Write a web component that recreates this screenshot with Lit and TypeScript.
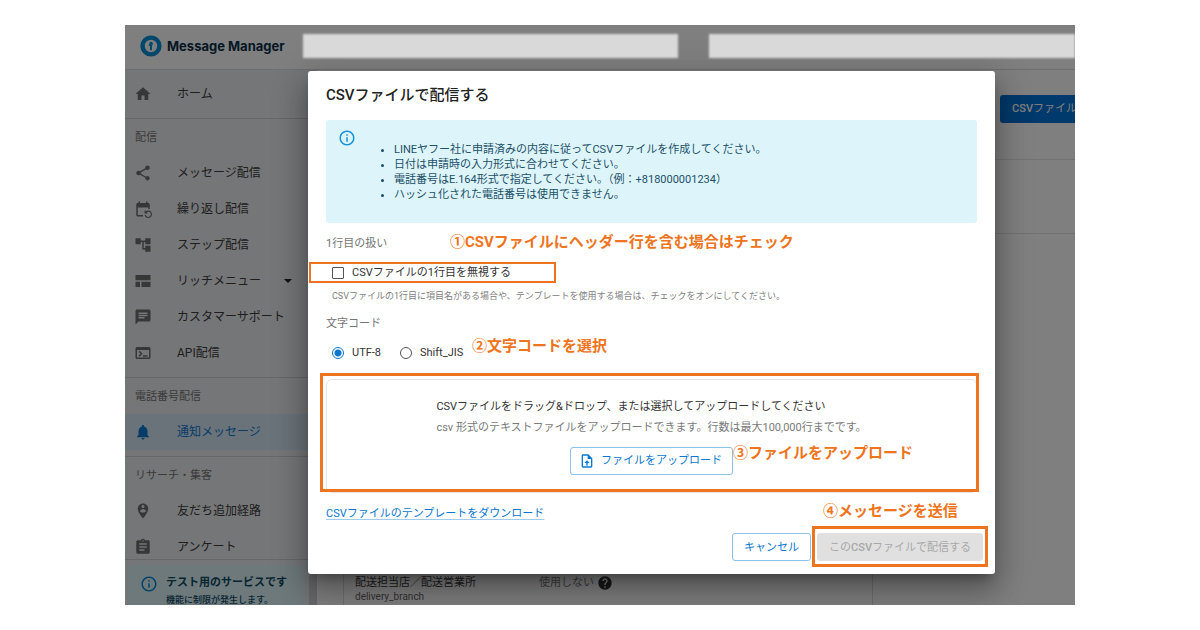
import { LitElement, html, css, svg } from "lit";
import { customElement, property } from "lit/decorators.js";
import { classMap } from "lit/directives/class-map.js";

const ICONS: Record<string, string> = {
  home: "M10 20v-6h4v6h5v-8h3L12 3 2 12h3v8z",
  share:
    "M18 16.08c-.76 0-1.44.3-1.96.77L8.91 12.7c.05-.23.09-.46.09-.7s-.04-.47-.09-.7l7.05-4.11c.54.5 1.25.81 2.04.81 1.66 0 3-1.34 3-3s-1.34-3-3-3-3 1.34-3 3c0 .24.04.47.09.7L8.04 9.81C7.5 9.31 6.79 9 6 9c-1.66 0-3 1.34-3 3s1.34 3 3 3c.79 0 1.5-.31 2.04-.81l7.12 4.16c-.05.21-.08.43-.08.65 0 1.61 1.31 2.92 2.92 2.92s2.92-1.31 2.92-2.92-1.31-2.92-2.92-2.92z",
  repeat:
    "M21 12V6c0-1.1-.9-2-2-2h-1V2h-2v2H8V2H6v2H5c-1.1 0-2 .9-2 2v14c0 1.1.9 2 2 2h7v-2H5V10h14v2h2zm-5.36 8c.43 1.45 1.77 2.5 3.36 2.5 1.93 0 3.5-1.57 3.5-3.5s-1.57-3.5-3.5-3.5c-.95 0-1.82.38-2.45 1H18V18h-4v-4h1.5v1.43c.9-.88 2.14-1.43 3.5-1.43 2.76 0 5 2.24 5 5s-2.24 5-5 5c-2.42 0-4.44-1.72-4.9-4h1.54z",
  tree: "M22 11V3h-7v3H9V3H2v8h7V8h2v10h4v3h7v-8h-7v3h-2V8h2v3z",
  layout: "M2 4h20v7H2zM2 13h6v7H2zM10 13h12v7H10z",
  chat: "M20 2H4c-1.1 0-1.99.9-1.99 2L2 22l4-4h14c1.1 0 2-.9 2-2V4c0-1.1-.9-2-2-2zM6 9h12v2H6V9zm8 5H6v-2h8v2zm4-6H6V6h12v2z",
  terminal:
    "M20 4H4c-1.11 0-2 .9-2 2v12c0 1.1.89 2 2 2h16c1.1 0 2-.9 2-2V6c0-1.1-.89-2-2-2zm0 14H4V8h16v10zm-2-1h-6v-2h6v2zM7.5 17l-1.41-1.41L8.67 13l-2.59-2.59L7.5 9l4 4-4 4z",
  bell: "M12 22c1.1 0 2-.9 2-2h-4c0 1.1.89 2 2 2zm6-6v-5c0-3.07-1.64-5.64-4.5-6.32V4c0-.83-.67-1.5-1.5-1.5s-1.5.67-1.5 1.5v.68C7.63 5.36 6 7.92 6 11v5l-2 2v1h16v-1l-2-2z",
  pin: "M12 2C8.14 2 5 5.14 5 9c0 5.25 7 13 7 13s7-7.75 7-13c0-3.86-3.14-7-7-7zm0 2c1.1 0 2 .9 2 2s-.9 2-2 2-2-.89-2-2c0-1.1.9-2 2-2zm0 10c-1.67 0-3.14-.85-4-2.15.02-1.32 2.67-2.05 4-2.05s3.98.73 4 2.05c-.86 1.3-2.33 2.15-4 2.15z",
  clipboard:
    "M19 3h-4.18C14.4 1.84 13.3 1 12 1c-1.3 0-2.4.84-2.82 2H5c-1.1 0-2 .9-2 2v14c0 1.1.9 2 2 2h14c1.1 0 2-.9 2-2V5c0-1.1-.9-2-2-2zm-7 0c.55 0 1 .45 1 1s-.45 1-1 1-1-.45-1-1 .45-1 1-1zm2 14H7v-2h7v2zm3-4H7v-2h10v2zm0-4H7V7h10v2z",
  info: "M11 7h2v2h-2zm0 4h2v6h-2zm1-9C6.48 2 2 6.48 2 12s4.48 10 10 10 10-4.48 10-10S17.52 2 12 2zm0 18c-4.41 0-8-3.59-8-8s3.59-8 8-8 8 3.59 8 8-3.59 8-8 8z",
  help: "M12 2C6.48 2 2 6.48 2 12s4.48 10 10 10 10-4.48 10-10S17.52 2 12 2zm1 17h-2v-2h2v2zm2.07-7.75l-.9.92C13.45 12.9 13 13.5 13 15h-2v-.5c0-1.1.45-2.1 1.17-2.83l1.24-1.26c.37-.36.59-.86.59-1.41 0-1.1-.9-2-2-2s-2 .9-2 2H8c0-2.21 1.79-4 4-4s4 1.79 4 4c0 .88-.36 1.68-.93 2.25z",
  upload:
    "M14 2H6c-1.1 0-1.99.9-1.99 2L4 20c0 1.1.89 2 1.99 2H18c1.1 0 2-.9 2-2V8l-6-6zm4 18H6V4h7v5h5v11zM8 15.01h3V19h2v-3.99h3L12 11z",
  caret: "M6 9l6 6 6-6z",
};

@customElement("mm-icon")
export class MmIcon extends LitElement {
  @property() name = "home";

  static styles = css`
    :host {
      display: inline-flex;
      flex: none;
      width: 18px;
      height: 18px;
    }
    svg {
      width: 100%;
      height: 100%;
      fill: currentColor;
    }
  `;

  render() {
    return html`<svg viewBox="0 0 24 24" aria-hidden="true">${svg`<path d=${ICONS[this.name]}></path>`}</svg>`;
  }
}

interface NavItem {
  icon: string;
  label: string;
  active?: boolean;
  menu?: boolean;
}

interface NavSection {
  title: string;
  items: NavItem[];
}

const SECTIONS: NavSection[] = [
  { title: "", items: [{ icon: "home", label: "ホーム" }] },
  {
    title: "配信",
    items: [
      { icon: "share", label: "メッセージ配信" },
      { icon: "repeat", label: "繰り返し配信" },
      { icon: "tree", label: "ステップ配信" },
      { icon: "layout", label: "リッチメニュー", menu: true },
      { icon: "chat", label: "カスタマーサポート" },
      { icon: "terminal", label: "API配信" },
    ],
  },
  { title: "電話番号配信", items: [{ icon: "bell", label: "通知メッセージ", active: true }] },
  {
    title: "リサーチ・集客",
    items: [
      { icon: "pin", label: "友だち追加経路" },
      { icon: "clipboard", label: "アンケート" },
    ],
  },
];

@customElement("mm-sidebar")
export class MmSidebar extends LitElement {
  static styles = css`
    :host {
      display: flex;
      flex-direction: column;
      flex: none;
      width: 184px;
      min-height: 0;
      background: #ebedf0;
      color: #3c3c3c;
    }
    .list {
      flex: 1;
      min-height: 0;
      overflow: hidden;
    }
    .section {
      padding-bottom: 6px;
      border-bottom: 1px solid #ccced0;
    }
    .section:first-child {
      padding-top: 6px;
    }
    .heading {
      height: 36px;
      margin: 0;
      padding-left: 10px;
      font-size: 11px;
      font-weight: 400;
      line-height: 38px;
      color: #757575;
    }
    .item {
      display: flex;
      align-items: center;
      height: 36px;
      padding: 0 13px 0 9px;
      color: inherit;
      font-size: 12px;
      text-decoration: none;
    }
    .item mm-icon {
      color: #6c6f6d;
    }
    .label {
      flex: 1;
      padding-left: 25px;
      line-height: 18px;
      white-space: nowrap;
    }
    .item .caret {
      color: #222;
      width: 16px;
      height: 16px;
    }
    .item.active,
    .item.active mm-icon {
      color: #0b78d0;
    }
    .active {
      background: #d6e6f4;
    }
    .foot {
      border-top: 1px solid #ccced0;
      padding: 5px 6px 0 3px;
      height: 40px;
    }
    .notice {
      display: flex;
      box-sizing: border-box;
      gap: 8px;
      height: 40px;
      padding: 10px 12px 0;
      border-radius: 4px 4px 0 0;
      background: #dcf2f9;
      color: #0f4a60;
      white-space: nowrap;
    }
    .notice mm-icon {
      color: #0288d1;
    }
    .strong {
      display: block;
      font-size: 11px;
      font-weight: 700;
      line-height: 16px;
    }
    .small {
      display: block;
      font-size: 9px;
      font-weight: 500;
      line-height: 18px;
    }
  `;

  private item(i: NavItem) {
    return html`<a href="#" class=${classMap({ item: true, active: !!i.active })}>
      <mm-icon name=${i.icon}></mm-icon>
      <span class="label">${i.label}</span>
      ${i.menu ? html`<mm-icon class="caret" name="caret"></mm-icon>` : ""}
    </a>`;
  }

  render() {
    return html`
      <nav class="list">
        ${SECTIONS.map(
          (s) => html`<div class="section">
            ${s.title ? html`<h2 class="heading">${s.title}</h2>` : ""} ${s.items.map((i) => this.item(i))}
          </div>`
        )}
      </nav>
      <div class="foot">
        <div class="notice">
          <mm-icon name="info"></mm-icon>
          <div>
            <span class="strong">テスト用のサービスです</span>
            <span class="small">機能に制限が発生します。</span>
          </div>
        </div>
      </div>
    `;
  }
}

@customElement("mm-csv-dialog")
export class MmCsvDialog extends LitElement {
  static styles = css`
    :host {
      display: block;
      box-sizing: border-box;
      padding: 12px 18px 13px;
      border-radius: 3px;
      background: #fff;
      color: #333;
      font-size: 11px;
      line-height: 16px;
      box-shadow:
        0 8px 11px -5px rgba(0, 0, 0, 0.3),
        0 18px 28px 2px rgba(0, 0, 0, 0.2),
        0 7px 34px 6px rgba(0, 0, 0, 0.16);
    }
    .title {
      margin: 0 0 13px;
      font-size: 15px;
      font-weight: 500;
      line-height: 24px;
      color: #222;
    }
    .alert {
      display: flex;
      padding: 9px 12px;
      border-radius: 3px;
      background: #def4fb;
      color: #1b5068;
    }
    .alert mm-icon {
      color: #1194db;
    }
    .rules {
      margin: 13px 0 12px;
      padding-left: 38px;
      line-height: 15px;
    }
    .group {
      margin: 13px 0 0;
      padding: 0;
      border: 0;
      min-width: 0;
    }
    .caption {
      padding: 0;
      color: #757575;
    }
    .row {
      position: relative;
      display: flex;
      align-items: center;
      height: 21px;
      margin-top: 10px;
      padding-left: 6px;
      gap: 19px;
    }
    .choice {
      display: flex;
      align-items: center;
      gap: 8px;
    }
    .choice input {
      appearance: none;
      box-sizing: border-box;
      width: 12px;
      height: 12px;
      margin: 0;
      border: 1px solid #555;
      background: #fff;
    }
    .choice input[type="checkbox"] {
      border-radius: 1px;
    }
    .choice input[type="radio"] {
      border-radius: 50%;
    }
    .choice input[type="radio"]:checked {
      border-color: #0b78d0;
      background: radial-gradient(circle, #0b78d0 3px, #fff 4px);
    }
    .hint {
      margin: 6px 0 0 6px;
      font-size: 9px;
      line-height: 14px;
      color: #808080;
    }
    .drop {
      position: relative;
      display: flex;
      flex-direction: column;
      align-items: center;
      margin-top: 16px;
      padding: 19px 0 17px;
      border: 1px solid #e4e4e4;
      border-radius: 6px;
    }
    .drop p {
      margin: 0 0 5px;
    }
    .drop .sub {
      margin-bottom: 11px;
      color: #7a7a7a;
    }
    .button {
      display: flex;
      align-items: center;
      justify-content: center;
      gap: 6px;
      box-sizing: border-box;
      height: 28px;
      padding: 1px 11px 0;
      border: 1px solid #8cc1ea;
      border-radius: 3px;
      background: #fff;
      color: #0b78d0;
      font: inherit;
    }
    .button.pick {
      padding: 0 10px 0 8px;
    }
    .button mm-icon {
      width: 16px;
      height: 16px;
    }
    .button:disabled {
      border-color: #e0e0e0;
      background: #e0e0e0;
      color: #a8a8a8;
    }
    .latin {
      font-weight: 500;
    }
    .template {
      display: inline-block;
      margin-top: 13px;
      color: #0b78d0;
      text-decoration: underline 1px #9fcbee;
      text-underline-offset: 2px;
    }
    .actions {
      display: flex;
      justify-content: flex-end;
      gap: 6px;
      margin: 11px -6px 0 0;
    }
    .submit {
      position: relative;
    }
    .mark {
      position: absolute;
      border: 3px solid #ee7420;
      pointer-events: none;
    }
    .mark.check {
      inset: 0 auto 0 -17px;
      width: 243px;
      border-width: 2px;
    }
    .mark.area {
      inset: -7px -3px 0 -7px;
    }
    .mark.send {
      inset: -7px -5px -6px -5px;
    }
    .note {
      position: absolute;
      font-size: 15px;
      font-weight: 700;
      line-height: 20px;
      color: #ee7420;
      white-space: nowrap;
      pointer-events: none;
    }
    .anchor {
      position: relative;
    }
    .note.one {
      left: 124px;
      bottom: 0;
    }
    .note.two {
      left: 146px;
      bottom: 7px;
    }
    .note.three {
      left: 100%;
      bottom: 12px;
    }
    .note.four {
      left: 6px;
      bottom: 40px;
    }
  `;

  render() {
    return html`
      <h1 class="title">CSVファイルで配信する</h1>
      <div class="alert">
        <mm-icon name="info"></mm-icon>
        <ul class="rules">
          <li>LINEヤフー社に申請済みの内容に従ってCSVファイルを作成してください。</li>
          <li>日付は申請時の入力形式に合わせてください。</li>
          <li>電話番号はE.164形式で指定してください。（例：+818000001234）</li>
          <li>ハッシュ化された電話番号は使用できません。</li>
        </ul>
      </div>

      <div class="group">
        <div class="caption anchor">
          1行目の扱い
          <span class="note one">①CSVファイルにヘッダー行を含む場合はチェック</span>
        </div>
        <div class="row">
          <label class="choice"><input type="checkbox" />CSVファイルの1行目を無視する</label>
          <span class="mark check"></span>
        </div>
        <p class="hint">
          CSVファイルの1行目に項目名がある場合や、テンプレートを使用する場合は、チェックをオンにしてください。
        </p>
      </div>

      <fieldset class="group">
        <legend class="caption">文字コード</legend>
        <div class="row">
          <label class="choice"><input type="radio" name="enc" value="utf8" checked />UTF-8</label>
          <label class="choice"><input type="radio" name="enc" value="sjis" />Shift_JIS</label>
          <span class="note two">②文字コードを選択</span>
        </div>
      </fieldset>

      <div class="drop">
        <div>
          <p>CSVファイルをドラッグ&amp;ドロップ、または選択してアップロードしてください</p>
          <p class="sub">csv 形式のテキストファイルをアップロードできます。行数は最大100,000行までです。</p>
        </div>
        <div class="anchor">
          <button class="button pick"><mm-icon name="upload"></mm-icon>ファイルをアップロード</button>
          <span class="note three">③ファイルをアップロード</span>
        </div>
        <span class="mark area"></span>
      </div>

      <a class="template" href="#">CSVファイルのテンプレートをダウンロード</a>

      <div class="actions">
        <button class="button">キャンセル</button>
        <div class="submit">
          <button class="button" disabled><span>この<span class="latin">CSV</span>ファイルで配信する</span></button>
          <span class="mark send"></span>
          <span class="note four">④メッセージを送信</span>
        </div>
      </div>
    `;
  }
}

@customElement("app-root")
export class AppRoot extends LitElement {
  static styles = css`
    :host {
      display: block;
      box-sizing: border-box;
      height: 100vh;
      padding: 25px 125px;
      background: #fff;
      font-family: Roboto, "Noto Sans CJK JP", sans-serif;
    }
    .frame {
      position: relative;
      display: flex;
      flex-direction: column;
      height: 100%;
      overflow: hidden;
      background: #fff;
    }
    .header {
      display: flex;
      align-items: center;
      box-sizing: border-box;
      flex: none;
      gap: 5px;
      height: 45px;
      padding: 0 15px 3px;
      border-bottom: 1px solid #dadcde;
    }
    .logo {
      width: 22px;
      height: 22px;
    }
    .brand {
      font-family: Inter, sans-serif;
      font-size: 13px;
      font-weight: 700;
      line-height: 20px;
      color: #0a2f4a;
    }
    .body {
      display: flex;
      flex: 1;
      min-height: 0;
    }
    .rail {
      flex: none;
      width: 8px;
      background: #d2d3d6;
    }
    .main {
      display: flex;
      flex: 1;
      flex-direction: column;
      min-width: 0;
    }
    .toolbar {
      display: flex;
      justify-content: flex-end;
      box-sizing: border-box;
      height: 90px;
      padding-top: 25px;
      border-bottom: 1px solid #e4e4e4;
    }
    .primary {
      height: 28px;
      margin-right: -2px;
      padding: 0 0 0 12px;
      border: 0;
      border-radius: 3px 0 0 3px;
      background: #0073d6;
      color: #fff;
      font: 11px/16px Roboto, "Noto Sans CJK JP", sans-serif;
      white-space: nowrap;
    }
    .latin {
      font-weight: 500;
    }
    .filters {
      height: 73px;
      border-bottom: 1px solid #e4e4e4;
    }
    .card {
      display: grid;
      grid-template-columns: 184px 1fr;
      flex: 1;
      align-items: end;
      margin: 0 202px 0 26px;
      padding: 0 0 2px 11px;
      border: 1px solid #dcdcdc;
      border-width: 0 1px;
      font-size: 11px;
      line-height: 16px;
      color: #3c3c3c;
    }
    .key {
      display: block;
      font-size: 10px;
      line-height: 12px;
      color: #666;
    }
    .state {
      display: flex;
      align-items: center;
      gap: 3px;
      padding-bottom: 12px;
      color: #808080;
    }
    .state mm-icon {
      width: 16px;
      height: 16px;
      color: #333;
    }
    .overlay {
      position: absolute;
      inset: 0;
      background: rgba(0, 0, 0, 0.5);
    }
    .masks {
      display: grid;
      grid-template-columns: 375fr 366fr;
      gap: 31px;
      box-sizing: border-box;
      height: 46px;
      padding: 9px 0 13px 178px;
    }
    .mask {
      background: #d9d9d9;
      filter: blur(1px);
    }
    .dialog {
      margin: 0 80px 0 183px;
    }
  `;

  render() {
    return html`
      <div class="frame">
        <header class="header">
          <svg class="logo" viewBox="0 0 22 22" aria-hidden="true">
            <circle cx="11" cy="11" r="8.4" fill="none" stroke="#0090d6" stroke-width="4.4"></circle>
            <path d="M11 6.8a2 2 0 0 1 1 3.7v4.7h-2v-4.2H8.6L9.4 8A2 2 0 0 1 11 6.8z" fill="#0090d6"></path>
          </svg>
          <span class="brand">Message Manager</span>
        </header>
        <div class="body">
          <mm-sidebar></mm-sidebar>
          <div class="rail"></div>
          <main class="main">
            <div class="toolbar">
              <button class="primary"><span class="latin">CSV</span>ファイル</button>
            </div>
            <div class="filters"></div>
            <div class="card">
              <div>配送担当店／配送営業所<span class="key">delivery_branch</span></div>
              <div class="state">使用しない<mm-icon name="help"></mm-icon></div>
            </div>
          </main>
        </div>
        <div class="overlay">
          <div class="masks"><div class="mask"></div><div class="mask"></div></div>
          <mm-csv-dialog class="dialog" role="dialog" aria-modal="true"></mm-csv-dialog>
        </div>
      </div>
    `;
  }
}
